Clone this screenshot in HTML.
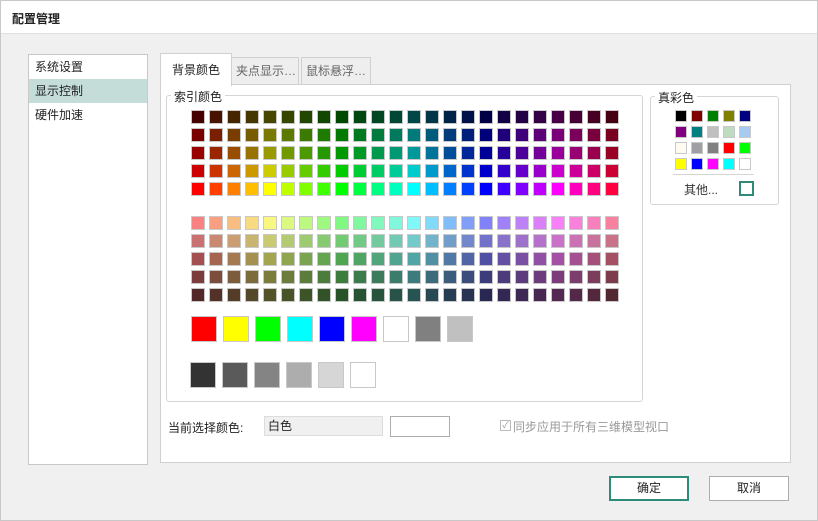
<!DOCTYPE html>
<html><head><meta charset="utf-8"><style>
body{margin:0;width:818px;height:521px;background:#f0f0f0;font-family:"Liberation Sans","Noto Sans CJK SC",sans-serif;font-size:12px;color:#222;position:relative;overflow:hidden}
.a{position:absolute;white-space:nowrap}
.win{left:0;top:0;width:816px;height:519px;border:1px solid #c8c8c8}
.title{left:1px;top:1px;width:816px;height:32px;background:#fff;border-bottom:1px solid #e0e0e0}
.list{left:28px;top:54px;width:118px;height:409px;background:#fff;border:1px solid #c8c8c8}
.list div{height:24px;line-height:24px;padding-left:6px}
.panel{left:160px;top:84px;width:629px;height:377px;background:#fff;border:1px solid #d0d0d0}
.tab{top:57px;height:27px;line-height:27px;background:#eee;border:1px solid #d0d0d0;border-bottom:none;color:#666;padding-left:4px;box-sizing:border-box;overflow:hidden}
.grp{border:1px solid #d5d5d5;border-radius:3px}
.lg{background:#fff;padding:0 3px}
.c{position:absolute;width:12px;height:12px;border:1px solid #c8c8c8}
.b{position:absolute;width:24px;height:24px;border:1px solid #c8c8c8}
.t{position:absolute;width:10px;height:10px;border:1px solid #c8c8c8}
.btn{top:476px;width:78px;height:23px;background:#fff;border:1px solid #adadad;text-align:center;line-height:23px}
</style></head><body>
<div class="a win"></div>
<div class="a title"></div>
<div class="a" style="left:12px;top:10px;font-weight:bold">配置管理</div>
<div class="a list"><div>系统设置</div><div style="background:#c4ddd8">显示控制</div><div>硬件加速</div></div>
<div class="a panel"></div>
<div class="a tab" style="left:231px;width:68px">夹点显示…</div>
<div class="a tab" style="left:301px;width:70px">鼠标悬浮…</div>
<div class="a" style="left:160px;top:53px;width:70px;height:32px;background:#fff;border:1px solid #d0d0d0;border-bottom:none;line-height:32px;text-align:center">背景颜色</div>
<div class="a grp" style="left:166px;top:95px;width:475px;height:305px"></div>
<div class="a lg" style="left:171px;top:88px">索引颜色</div>
<div class="a grp" style="left:650px;top:96px;width:127px;height:107px"></div>
<div class="a lg" style="left:655px;top:89px">真彩色</div>
<div class="a" style="left:673px;top:174px;width:81px;height:1px;background:#d5d5d5"></div>
<div class="a" style="left:684px;top:181px;color:#333">其他...</div>
<div class="a" style="left:739px;top:181px;width:11px;height:11px;border:2px solid #2e8b7a;background:#fff"></div>
<div id="g"></div>
<div class="a" style="left:168px;top:419px">当前选择颜色:</div>
<div class="a" style="left:264px;top:416px;height:18px;background:#f0f0f0;border:1px solid #dcdcdc;line-height:18px;padding-left:3px;width:114px">白色</div>
<div class="a" style="left:390px;top:416px;width:58px;height:19px;background:#fff;border:1px solid #adadad"></div>
<div class="a" style="left:500px;top:420px;width:9px;height:9px;border:1px solid #bbb;font-size:9px;line-height:9px;color:#999;text-align:center">✓</div>
<div class="a" style="left:513px;top:418px;color:#999">同步应用于所有三维模型视口</div>
<div class="a btn" style="left:609px;border:2px solid #2e8b7a;width:76px;height:21px;line-height:21px">确定</div>
<div class="a btn" style="left:709px">取消</div>
<script>
(function(){
var g=document.getElementById('g'),h='';
var tp=[[100,14],[100,24],[100,30],[100,40],[100,50]];
var bt=[[90,74],[45,62],[35,48],[35,36],[35,24]];
for(var r=0;r<5;r++)for(var c=0;c<24;c++){var hu=c*15;
h+='<div class="c" style="left:'+(191+c*18)+'px;top:'+(110+r*18)+'px;background:hsl('+hu+','+tp[r][0]+'%,'+tp[r][1]+'%)"></div>';
h+='<div class="c" style="left:'+(191+c*18)+'px;top:'+(216+r*18)+'px;background:hsl('+hu+','+bt[r][0]+'%,'+bt[r][1]+'%)"></div>';}
var b1=['#f00','#ff0','#0f0','#0ff','#00f','#f0f','#fff','#808080','#c0c0c0'];
b1.forEach(function(x,i){h+='<div class="b" style="left:'+(191+i*32)+'px;top:316px;background:'+x+'"></div>'});
var b2=['#333','#5a5a5a','#848484','#adadad','#d6d6d6','#fff'];
b2.forEach(function(x,i){h+='<div class="b" style="left:'+(190+i*32)+'px;top:362px;background:'+x+'"></div>'});
var t=['#000','#800000','#008000','#808000','#000080','#800080','#008080','#c0c0c0','#c0dcc0','#a6caf0','#fffbf0','#a0a0a4','#808080','#f00','#0f0','#ff0','#00f','#f0f','#0ff','#fff'];
t.forEach(function(x,i){h+='<div class="t" style="left:'+(675+(i%5)*16)+'px;top:'+(110+Math.floor(i/5)*16)+'px;background:'+x+'"></div>'});
g.innerHTML=h;
})();
</script>
</body></html>
